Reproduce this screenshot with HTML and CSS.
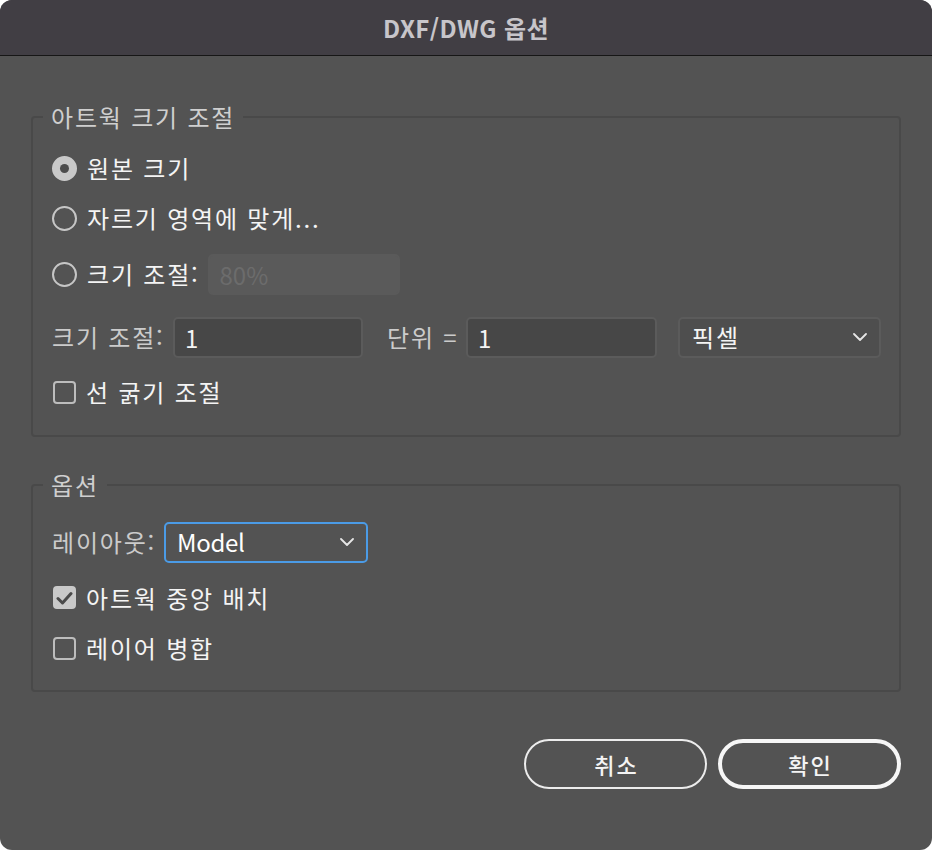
FILE: index.html
```html
<!DOCTYPE html>
<html lang="ko">
<head>
<meta charset="utf-8">
<title>DXF/DWG 옵션</title>
<link rel="stylesheet" href="styles.css">
</head>
<body>
<div class="dialog">
  <header class="titlebar">DXF/DWG 옵션</header>
  <main class="content">
    <fieldset class="group group-size">
      <legend>아트웍 크기 조절</legend>
      <div class="row r1">
        <span class="radio checked"></span>
        <span class="opt">원본 크기</span>
      </div>
      <div class="row r2">
        <span class="radio"></span>
        <span class="opt">자르기 영역에 맞게...</span>
      </div>
      <div class="row r3">
        <span class="radio"></span>
        <span class="opt">크기 조절:</span>
        <input class="field disabled" type="text" placeholder="80%" disabled>
      </div>
      <div class="row r4">
        <span class="lbl lbl-scale">크기 조절:</span>
        <input class="field f1" type="text" value="1">
        <span class="lbl lbl-unit">단위 =</span>
        <input class="field f2" type="text" value="1">
        <div class="select sel-unit">
          <span>픽셀</span>
          <svg class="chev" width="14" height="8" viewBox="0 0 14 8"><polyline points="1,1 7,7 13,1" fill="none" stroke="#e6e6e6" stroke-width="1.8" stroke-linecap="round" stroke-linejoin="round"/></svg>
        </div>
      </div>
      <div class="row r5">
        <span class="check"></span>
        <span class="opt">선 굵기 조절</span>
      </div>
    </fieldset>

    <fieldset class="group group-opt">
      <legend>옵션</legend>
      <div class="row o1">
        <span class="lbl lbl-layout">레이아웃:</span>
        <div class="select sel-layout">
          <span class="latin">Model</span>
          <svg class="chev" width="14" height="8" viewBox="0 0 14 8"><polyline points="1,1 7,7 13,1" fill="none" stroke="#e6e6e6" stroke-width="1.8" stroke-linecap="round" stroke-linejoin="round"/></svg>
        </div>
      </div>
      <div class="row o2">
        <span class="check checked">
          <svg width="17" height="14" viewBox="0 0 17 14"><polyline points="2,7.5 6.5,12 15,2.5" fill="none" stroke="#4a4a4a" stroke-width="3" stroke-linecap="round" stroke-linejoin="round"/></svg>
        </span>
        <span class="opt">아트웍 중앙 배치</span>
      </div>
      <div class="row o3">
        <span class="check"></span>
        <span class="opt">레이어 병합</span>
      </div>
    </fieldset>

    <div class="buttons">
      <button class="btn cancel">취소</button>
      <button class="btn ok">확인</button>
    </div>
  </main>
</div>
</body>
</html>
```

FILE: styles.css
```css
* { box-sizing: border-box; }

html, body {
  margin: 0;
  padding: 0;
  background: #ffffff;
}

body {
  font-family: "Noto Sans CJK KR", "Noto Sans", sans-serif;
  font-size: 24px;
  letter-spacing: 1.8px;
  color: #f2f2f2;
}

.dialog {
  width: 932px;
  height: 850px;
  background: #535353;
  border-radius: 12px;
  overflow: hidden;
}

.titlebar {
  height: 56px;
  background: #413e44;
  border-bottom: 1px solid #161616;
  color: #c7c5ca;
  font-weight: 700;
  font-size: 24px;
  line-height: 55px;
  text-align: center;
  letter-spacing: 0.4px;
}

.content {
  padding: 0 31px;
}

.group {
  margin: 0;
  border: 2px solid #494949;
  border-radius: 4px;
  padding: 0 18px 20px 19px;
  min-width: 0;
}

.group legend {
  margin-left: -9px;
  padding: 0 8px;
  line-height: 30px;
  color: #cfcfcf;
  font-size: 24px;
}

.group-size {
  margin-top: 46px;
  padding-top: 11px;
}

.group-opt {
  margin-top: 33px;
  padding-top: 15px;
}

.row {
  display: flex;
  align-items: center;
}

.r1, .r2 { height: 50px; }
.r3 { height: 62px; }
.r4 { height: 64px; }
.r5 { height: 46px; }
.o1 { height: 54px; }
.o2 { height: 57px; }
.o3 { height: 44px; }

.opt {
  color: #f4f4f4;
  margin-left: 10px;
  line-height: 1;
}

.lbl {
  color: #cbcbcb;
  line-height: 1;
  white-space: nowrap;
}

.radio {
  width: 25px;
  height: 25px;
  border: 2px solid #c6c6c6;
  border-radius: 50%;
  flex: none;
  display: flex;
  align-items: center;
  justify-content: center;
}

.radio.checked {
  background: #c9c9c9;
  border-color: #c9c9c9;
}

.radio.checked::after {
  content: "";
  width: 9px;
  height: 9px;
  border-radius: 50%;
  background: #4d4d4d;
}

.check {
  width: 23px;
  height: 23px;
  border: 2px solid #bdbdbd;
  border-radius: 4px;
  flex: none;
  margin-left: 1px;
  display: flex;
  align-items: center;
  justify-content: center;
}

.check.checked {
  background: #c9c9c9;
  border-color: #c9c9c9;
}

.field {
  font-family: "Noto Sans CJK KR", "Noto Sans", sans-serif;
  font-size: 24px;
  letter-spacing: 0;
  color: #f4f4f4;
  height: 41px;
  background: #474747;
  border: 2px solid #5b5b5b;
  border-radius: 5px;
  padding: 0 10px;
  outline: none;
}

.field.disabled {
  width: 192px;
  margin-left: 8px;
  background: #5a5a5a;
  border-color: #5a5a5a;
}

.field.disabled::placeholder {
  color: #6c6c6c;
}

.lbl-scale { width: 113px; }
.f1 { width: 190px; margin-left: 8px; }
.lbl-unit { width: 71px; margin-left: 24px; }
.f2 { width: 191px; margin-left: 8px; }

.select {
  height: 41px;
  border-radius: 5px;
  display: flex;
  align-items: center;
  justify-content: space-between;
  color: #f4f4f4;
  line-height: 1;
}

.sel-unit {
  width: 203px;
  margin-left: 21px;
  background: #4e4e4e;
  border: 2px solid #5b5b5b;
  padding: 0 12px 0 12px;
}

.lbl-layout { width: 112px; }

.sel-layout {
  width: 204px;
  margin-left: 0;
  background: #535353;
  border: 2px solid #4b9be6;
  padding: 0 12px 0 11px;
  color: #ffffff;
}

.latin {
  letter-spacing: -0.3px;
}

.chev {
  flex: none;
}

.buttons {
  display: flex;
  justify-content: flex-end;
  gap: 11px;
  margin-top: 47px;
}

.btn {
  width: 183px;
  height: 50px;
  border-radius: 25px;
  background: transparent;
  color: #f4f4f4;
  font-family: "Noto Sans CJK KR", "Noto Sans", sans-serif;
  font-size: 22px;
  font-weight: 500;
  letter-spacing: 2px;
  padding: 0 0 0 2px;
}

.btn.cancel {
  border: 2px solid #ececec;
}

.btn.ok {
  border: 4px solid #f6f6f6;
}
```
